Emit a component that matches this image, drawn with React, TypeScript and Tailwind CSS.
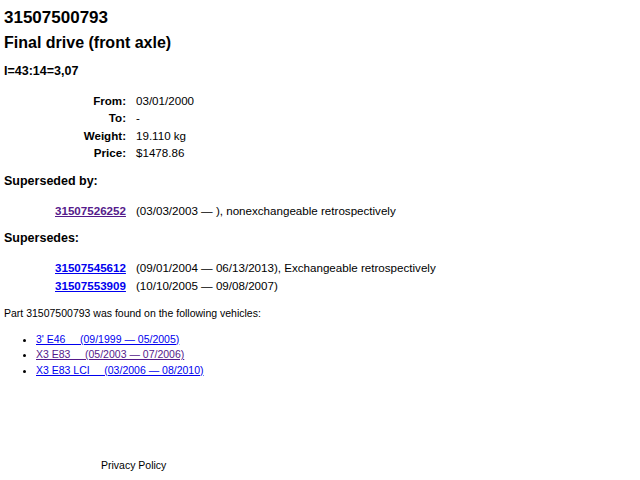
export default function App() {
  const specs = [
    ["From:", "03/01/2000"],
    ["To:", "-"],
    ["Weight:", "19.110 kg"],
    ["Price:", "$1478.86"],
  ]

  return (
    <div className="min-h-[480px] bg-white px-[4px] text-black" style={{ fontFamily: '"Liberation Sans", Arial, sans-serif' }}>
      {/* Header */}
      <h1 className="pt-[8px] text-[17px] font-bold leading-[20px]">31507500793</h1>
      <h2 className="mt-[5px] text-[16px] font-bold leading-[19px]">Final drive (front axle)</h2>
      <h3 className="mt-[12px] text-[12.5px] font-bold leading-[15px]">I=43:14=3,07</h3>

      {/* Specs */}
      <div className="mt-[13px] grid grid-cols-[122px_auto] gap-x-[10px] text-[11.6px] leading-[17.3px]">
        {specs.map(([label, value]) => (
          <div key={label} className="contents">
            <div className="text-right font-bold">{label}</div>
            <div>{value}</div>
          </div>
        ))}
      </div>

      {/* Superseded by */}
      <h3 className="mt-[13px] text-[12.5px] font-bold leading-[15px]">Superseded by:</h3>
      <div className="mt-[13px] grid grid-cols-[132px_auto] text-[11.6px] leading-[17.3px]">
        <div className="pl-[51px]">
          <a href="#" className="font-bold text-[#551a8b] underline">31507526252</a>
        </div>
        <div>(03/03/2003 — ), nonexchangeable retrospectively</div>
      </div>

      {/* Supersedes */}
      <h3 className="mt-[12px] text-[12.5px] font-bold leading-[15px]">Supersedes:</h3>
      <div className="mt-[13px] grid grid-cols-[132px_auto] text-[11.6px] leading-[17.3px]">
        <div className="pl-[51px]">
          <a href="#" className="font-bold text-[#0000ee] underline">31507545612</a>
        </div>
        <div>(09/01/2004 — 06/13/2013), Exchangeable retrospectively</div>
        <div className="pl-[51px]">
          <a href="#" className="font-bold text-[#0000ee] underline">31507553909</a>
        </div>
        <div>(10/10/2005 — 09/08/2007)</div>
      </div>

      {/* Vehicles */}
      <p className="mt-[12.5px] text-[10.5px] leading-[13px]">Part 31507500793 was found on the following vehicles:</p>
      <ul className="mt-[12px] list-disc pl-[32px] text-[10.5px] leading-[15.5px]">
        <li><a href="#" className="text-[#0000ee] underline">3' E46 &nbsp;&nbsp;&nbsp;&nbsp;(09/1999 — 05/2005)</a></li>
        <li><a href="#" className="text-[#551a8b] underline">X3 E83 &nbsp;&nbsp;&nbsp;&nbsp;(05/2003 — 07/2006)</a></li>
        <li><a href="#" className="text-[#0000ee] underline">X3 E83 LCI &nbsp;&nbsp;&nbsp;&nbsp;(03/2006 — 08/2010)</a></li>
      </ul>

      {/* Footer */}
      <div className="mt-[81px] pl-[97px] text-[10.5px] leading-[13px]">Privacy Policy</div>
    </div>
  )
}
